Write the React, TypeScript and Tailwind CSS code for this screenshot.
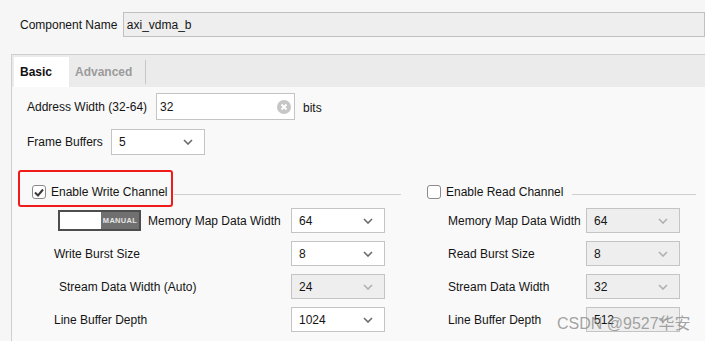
const FONT = { fontFamily: '"Liberation Sans", Arial, sans-serif' };

function Chevron({ disabled }: { disabled?: boolean }) {
  return (
    <svg width="10" height="6" viewBox="0 0 10 6" className="shrink-0">
      <path
        d="M1 1 L5 5 L9 1"
        fill="none"
        stroke={disabled ? '#b0b0b0' : '#6a6a6a'}
        strokeWidth="1.6"
      />
    </svg>
  );
}

function Select({ value, disabled, w = 'w-[94px]', h = 'h-[25px]' }: { value: string; disabled?: boolean; w?: string; h?: string }) {
  return (
    <div
      className={`${w} ${h} flex items-center justify-between border border-[#c4c4c4] pl-[7px] pr-[11px] ${
        disabled ? 'bg-[#eeeeee]' : 'bg-white'
      }`}
    >
      <span>{value}</span>
      <Chevron disabled={disabled} />
    </div>
  );
}

function Checkbox({ checked }: { checked?: boolean }) {
  return (
    <div className="w-[14px] h-[14px] rounded-[3px] border border-[#8a8a8a] bg-white flex items-center justify-center">
      {checked && (
        <svg width="10" height="9" viewBox="0 0 10 9">
          <path d="M1 4.5 L4 7.5 L9 1.5" fill="none" stroke="#3a3a3a" strokeWidth="2" />
        </svg>
      )}
    </div>
  );
}

function Toggle() {
  return (
    <div className="w-[83px] h-[21px] flex border-2 border-[#4d4d4d] bg-white">
      <div className="w-[41px] bg-white" />
      <div className="flex-1 bg-[#707070] flex items-center justify-center text-[7.5px] font-bold text-[#e6e6e6] tracking-[0.3px]">
        MANUAL
      </div>
    </div>
  );
}

export default function App() {
  const leftRows = [
    { label: 'Write Burst Size', value: '8', pl: 'pl-[26px]' },
    { label: 'Stream Data Width (Auto)', value: '24', pl: 'pl-[31px]', disabled: true },
    { label: 'Line Buffer Depth', value: '1024', pl: 'pl-[26px]' },
  ];
  const rightRows = [
    { label: 'Memory Map Data Width', value: '64' },
    { label: 'Read Burst Size', value: '8' },
    { label: 'Stream Data Width', value: '32' },
    { label: 'Line Buffer Depth', value: '512' },
  ];

  return (
    <div className="relative w-[705px] h-[341px] overflow-hidden bg-[#f6f6f6] text-[12px] text-[#141414]" style={FONT}>
      {/* component name */}
      <div className="flex items-center pt-[12px] pl-[20px]">
        <span className="w-[106px]">Component Name</span>
        <div className="w-[600px] h-[25px] flex items-center border border-[#c0c0c0] bg-[#eeeeee] pl-[3px]">
          axi_vdma_b
        </div>
      </div>

      {/* tab panel */}
      <div className="mt-[17px] ml-[11px] h-[300px] border-t border-l border-[#cfcfcf] bg-[#f9f9f9]">
        <div className="h-[32px] bg-[#ebebeb] flex pl-[2px] pt-[2px] font-bold">
          <div className="w-[55px] bg-white flex items-center pl-[6px] text-[#111]">Basic</div>
          <div className="w-[77px] flex items-center pl-[6px] text-[#9b9b9b] border-r border-[#c6c6c6] my-[3px]">
            Advanced
          </div>
        </div>

        <div className="pl-[15px]">
          <div className="flex items-center mt-[6px]">
            <span className="w-[129px]">Address Width (32-64)</span>
            <div className="w-[139px] h-[27px] flex items-center justify-between border border-[#c4c4c4] bg-white pl-[3px] pr-[3px]">
              <span>32</span>
              <div className="w-[14px] h-[14px] rounded-full bg-[#c6c6c6] flex items-center justify-center">
                <svg width="8" height="8" viewBox="0 0 8 8">
                  <path d="M1.5 1.5 L6.5 6.5 M6.5 1.5 L1.5 6.5" stroke="white" strokeWidth="1.8" />
                </svg>
              </div>
            </div>
            <span className="ml-[8px] mt-[2px]">bits</span>
          </div>

          <div className="flex items-center mt-[9px]">
            <span className="w-[84px]">Frame Buffers</span>
            <Select value="5" h="h-[26px]" />
          </div>

          <div className="flex mt-[25px] pl-[1px]">
            {/* write channel */}
            <div className="relative w-[373px]">
              <div className="absolute left-[-10px] top-[-10px] w-[155px] h-[37px] border-2 border-[#f01c1c] rounded-[3px]" />
              <div className="h-[24px] flex items-center pl-[4px]">
                <Checkbox checked />
                <span className="ml-[5px]">Enable Write Channel</span>
                <div className="flex-1 h-px bg-[#cfcfcf] ml-[6px] mt-[4px]" />
              </div>
              <div className="h-[33px] flex items-center">
                <div className="w-[263px] flex items-center pl-[30px]">
                  <Toggle />
                  <span className="ml-[7px]">Memory Map Data Width</span>
                </div>
                <Select value="64" />
              </div>
              {leftRows.map((r) => (
                <div key={r.label} className="h-[33px] flex items-center">
                  <span className={`w-[263px] ${r.pl}`}>{r.label}</span>
                  <Select value={r.value} disabled={r.disabled} />
                </div>
              ))}
            </div>

            {/* read channel */}
            <div className="w-[269px] ml-[26px]">
              <div className="h-[24px] flex items-center">
                <Checkbox />
                <span className="ml-[5px]">Enable Read Channel</span>
                <div className="flex-1 h-px bg-[#cfcfcf] ml-[9px] mt-[4px]" />
              </div>
              {rightRows.map((r) => (
                <div key={r.label} className="h-[33px] flex items-center">
                  <span className="w-[159px] pl-[21px]">{r.label}</span>
                  <Select value={r.value} disabled />
                </div>
              ))}
            </div>
          </div>
        </div>
      </div>

      {/* watermark */}
      <div
        className="absolute left-[557px] top-[312px] text-[16px] text-[#8c8c8c]/80 whitespace-nowrap"
        style={{ fontFamily: '"Liberation Sans", "Noto Sans CJK SC", sans-serif' }}
      >
        CSDN @9527华安
      </div>
    </div>
  );
}
